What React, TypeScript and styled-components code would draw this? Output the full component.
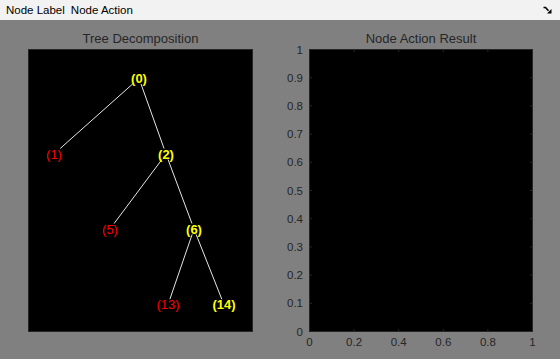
import React from 'react';
import styled, { createGlobalStyle } from 'styled-components';

const GlobalStyle = createGlobalStyle`
  html, body {
    margin: 0;
    padding: 0;
    background: #808080;
  }
  body {
    font-family: "Liberation Sans", Arial, sans-serif;
  }
`;

const Window = styled.div`
  width: 560px;
  height: 359px;
  display: flex;
  flex-direction: column;
  background: #808080;
  overflow: hidden;
`;

const MenuBar = styled.div`
  height: 20px;
  flex: none;
  display: flex;
  align-items: center;
  padding: 0 8px 0 3px;
  background: #f2f2f2;
`;

const MenuItem = styled.div`
  padding: 0 3px;
  font-size: 11.5px;
  color: #000;
  line-height: 20px;
`;

const Spacer = styled.div`
  flex: 1;
`;

const Figure = styled.div`
  flex: 1;
  display: grid;
  grid-template-columns: 225px 224px;
  column-gap: 56px;
  padding-left: 28px;
  align-content: start;
`;

const PlotColumn = styled.div`
  display: flex;
  flex-direction: column;
`;

const Title = styled.div`
  padding-top: 11px;
  margin-bottom: 3px;
  height: 15px;
  line-height: 15px;
  font-size: 13px;
  color: #262626;
  text-align: center;
  white-space: nowrap;
`;

const AxesBox = styled.div<{ $w: number; $h: number }>`
  position: relative;
  box-sizing: border-box;
  width: ${(p) => p.$w}px;
  height: ${(p) => p.$h}px;
  background: #000;
  border: 1px solid #262626;
`;

const TreeSvg = styled.svg`
  display: block;
  width: 100%;
  height: 100%;
`;

const TickOverlay = styled.svg`
  position: absolute;
  left: -1px;
  top: -1px;
  overflow: visible;
`;

const DockIcon = () => (
  <svg width="9" height="8" viewBox="0 0 9 8">
    <path d="M0.5 1.5 H2.5 L5.5 4.8" stroke="#000" strokeWidth="1.6" fill="none" />
    <polygon points="8.5,7.5 8.5,3 4,7.5" fill="#000" />
  </svg>
);

type TreeNode = { id: number; x: number; y: number; leaf: boolean; parent?: number };

const nodes: TreeNode[] = [
  { id: 0, x: 110, y: 28.3, leaf: false },
  { id: 1, x: 25, y: 104, leaf: true, parent: 0 },
  { id: 2, x: 137, y: 104, leaf: false, parent: 0 },
  { id: 5, x: 81, y: 179, leaf: true, parent: 2 },
  { id: 6, x: 165, y: 179, leaf: false, parent: 2 },
  { id: 13, x: 139, y: 254.7, leaf: true, parent: 6 },
  { id: 14, x: 195, y: 254.7, leaf: false, parent: 6 },
];

// edges stop at the label boxes, as in the original tree plot
const TRIM = 5.5;

const TreePlot = () => {
  const byId = (id: number) => nodes.find((n) => n.id === id)!;
  return (
    <TreeSvg viewBox="0 0 223 281">
      {nodes
        .filter((n) => n.parent !== undefined)
        .map((n) => {
          const p = byId(n.parent!);
          const dy = n.y - p.y;
          const dx = n.x - p.x;
          const k = TRIM / dy;
          return (
            <line
              key={`l${n.id}`}
              x1={p.x + dx * k}
              y1={p.y + TRIM}
              x2={n.x - dx * k}
              y2={n.y - TRIM}
              stroke="#e6e6e6"
              strokeWidth="1"
            />
          );
        })}
      {nodes.map((n) => (
        <text
          key={`t${n.id}`}
          x={n.x}
          y={n.y + 4.6}
          textAnchor="middle"
          fontFamily='"Liberation Sans", Arial, sans-serif'
          fontSize="13"
          fontWeight={n.leaf ? 400 : 700}
          fill={n.leaf ? '#ff0000' : '#ffff00'}
        >
          ({n.id})
        </text>
      ))}
    </TreeSvg>
  );
};

const AXIS = '#262626';

const ResultAxes = ({ w, h }: { w: number; h: number }) => {
  const yTicks = [0, 0.1, 0.2, 0.3, 0.4, 0.5, 0.6, 0.7, 0.8, 0.9, 1];
  const xTicks = [0, 0.2, 0.4, 0.6, 0.8, 1];
  const ty = (v: number) => 0.5 + (h - 1) * (1 - v);
  const tx = (v: number) => 0.5 + (w - 1) * v;
  const fmt = (v: number) => (v === 0 || v === 1 ? String(v) : v.toFixed(1));
  return (
    <TickOverlay width={w} height={h}>
      {yTicks.map((v) => (
        <g key={`y${v}`}>
          <line x1={0} x2={3} y1={ty(v)} y2={ty(v)} stroke={AXIS} />
          <line x1={w - 3} x2={w} y1={ty(v)} y2={ty(v)} stroke={AXIS} />
          <text
            x={-6}
            y={ty(v) + 4}
            textAnchor="end"
            fontFamily='"Liberation Sans", Arial, sans-serif'
            fontSize="11.5"
            fill={AXIS}
          >
            {fmt(v)}
          </text>
        </g>
      ))}
      {xTicks.map((v) => (
        <g key={`x${v}`}>
          <line x1={tx(v)} x2={tx(v)} y1={0} y2={3} stroke={AXIS} />
          <line x1={tx(v)} x2={tx(v)} y1={h - 3} y2={h} stroke={AXIS} />
          <text
            x={tx(v)}
            y={h + 14}
            textAnchor="middle"
            fontFamily='"Liberation Sans", Arial, sans-serif'
            fontSize="11.5"
            fill={AXIS}
          >
            {fmt(v)}
          </text>
        </g>
      ))}
    </TickOverlay>
  );
};

const App = () => (
  <>
    <GlobalStyle />
    <Window>
      <MenuBar>
        <MenuItem>Node Label</MenuItem>
        <MenuItem>Node Action</MenuItem>
        <Spacer />
        <DockIcon />
      </MenuBar>
      <Figure>
        <PlotColumn>
          <Title>Tree Decomposition</Title>
          <AxesBox $w={225} $h={283}>
            <TreePlot />
          </AxesBox>
        </PlotColumn>
        <PlotColumn>
          <Title>Node Action Result</Title>
          <AxesBox $w={224} $h={283}>
            <ResultAxes w={224} h={283} />
          </AxesBox>
        </PlotColumn>
      </Figure>
    </Window>
  </>
);

export default App;
